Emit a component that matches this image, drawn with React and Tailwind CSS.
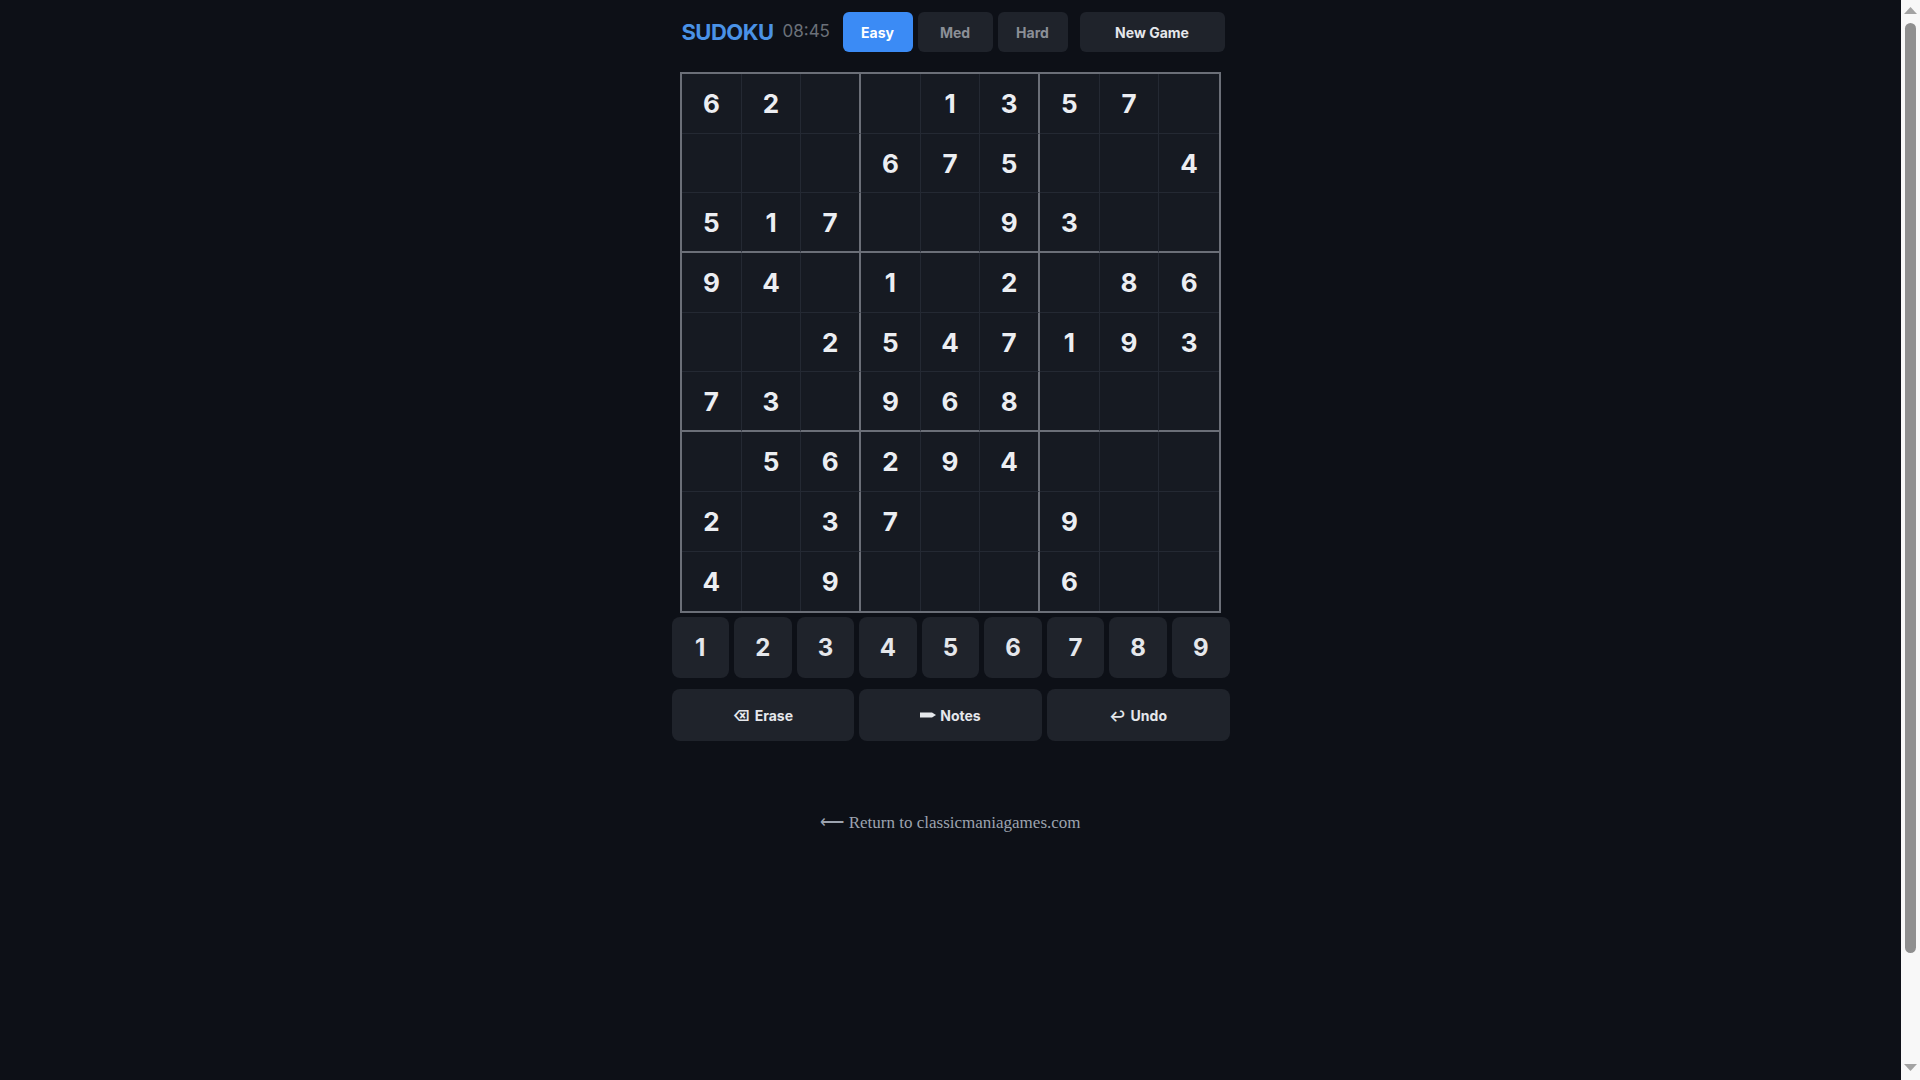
import React, { useState } from 'react';

const PUZZLE = [
  [6, 2, 0, 0, 1, 3, 5, 7, 0],
  [0, 0, 0, 6, 7, 5, 0, 0, 4],
  [5, 1, 7, 0, 0, 9, 3, 0, 0],
  [9, 4, 0, 1, 0, 2, 0, 8, 6],
  [0, 0, 2, 5, 4, 7, 1, 9, 3],
  [7, 3, 0, 9, 6, 8, 0, 0, 0],
  [0, 5, 6, 2, 9, 4, 0, 0, 0],
  [2, 0, 3, 7, 0, 0, 9, 0, 0],
  [4, 0, 9, 0, 0, 0, 6, 0, 0],
];

const font = { fontFamily: 'Inter, "Liberation Sans", sans-serif' };

// thin lines inside a box, grey thick lines between boxes
const cellBorder = (r, c) => {
  let cls = '';
  if (c === 2 || c === 5) cls += ' border-r-2 border-r-[#6b6f78]';
  else if (c < 8) cls += ' border-r border-r-[#242933]';
  if (r === 2 || r === 5) cls += ' border-b-2 border-b-[#6b6f78]';
  else if (r < 8) cls += ' border-b border-b-[#242933]';
  return cls;
};

const PencilIcon = () => (
  <svg width="16" height="6" viewBox="0 0 16 6" className="mr-[4px]">
    <path d="M0 0.5h12l4 2.5-4 2.5H0z" fill="currentColor" />
  </svg>
);

// the browser's scrollbar as it shows in the screenshot
const ScrollBar = () => (
  <div className="fixed top-0 right-0 h-screen w-[19px] bg-[#f8f8f8] flex flex-col items-center">
    <svg width="13" height="8" viewBox="0 0 13 8" className="mt-[7px]">
      <path d="M6.5 0L13 7H0z" fill="#a3a3a3" />
    </svg>
    <div className="mt-[8px] w-[11px] h-[930px] rounded-full bg-[#8f8f8f]" />
    <div className="flex-1" />
    <svg width="13" height="8" viewBox="0 0 13 8" className="mb-[8px]">
      <path d="M0 0h13L6.5 7z" fill="#a3a3a3" />
    </svg>
  </div>
);

const App = () => {
  const [level, setLevel] = useState('Easy');
  const [selected, setSelected] = useState(null);

  return (
    <div className="min-h-screen box-content pb-32 pr-[19px] bg-[#0d1017] text-[#e5e7eb]" style={font}>
      <div className="w-[558px] mx-auto pt-[12px]">
        {/* Header */}
        <div className="flex items-center h-[40px] pl-[10px]">
          <h1 className="w-[90px] whitespace-nowrap text-[22px] font-bold tracking-tight text-[#4a92e6]">SUDOKU</h1>
          <span className="ml-[11px] w-[44px] text-[17px] text-[#6b7079]">08:45</span>
          <div className="ml-[16px] flex gap-[5px]">
            {['Easy', 'Med', 'Hard'].map((l) => (
              <button
                key={l}
                onClick={() => setLevel(l)}
                className={
                  'h-[40px] rounded-md text-[14px] font-bold ' +
                  (l === 'Med' ? 'w-[75px] ' : 'w-[70px] ') +
                  (level === l ? 'bg-[#3b8bf5] text-white' : 'bg-[#1f232b] text-[#8b8f97]')
                }
              >
                {l}
              </button>
            ))}
          </div>
          <button className="ml-[12px] w-[145px] h-[40px] rounded-md bg-[#1f232b] text-[14px] font-bold text-[#e5e7eb]">
            New Game
          </button>
        </div>

        {/* Board */}
        <div className="mt-[20px] mx-auto w-[541px] border-2 border-[#6b6f78] bg-[#161a22] grid grid-cols-9">
          {PUZZLE.map((row, r) =>
            row.map((v, c) => (
              <div
                key={r + '-' + c}
                onClick={() => setSelected(r * 9 + c)}
                className={
                  'h-[59.7px] flex items-center justify-center text-[26px] font-bold text-[#eceef2]' +
                  cellBorder(r, c)
                }
              >
                {v || ''}
              </div>
            ))
          )}
        </div>

        {/* Number pad */}
        <div className="mt-[4px] grid grid-cols-9 gap-[5px]">
          {[1, 2, 3, 4, 5, 6, 7, 8, 9].map((n) => (
            <button key={n} className="h-[61px] rounded-lg bg-[#1f232b] text-[24px] font-bold text-[#e5e7eb]">
              {n}
            </button>
          ))}
        </div>

        {/* Actions */}
        <div className="mt-[11px] grid grid-cols-3 gap-[5px]">
          <button className="h-[52px] rounded-lg bg-[#1f232b] flex items-center justify-center text-[14px] font-bold">
            <span className="mr-[5px]">⌫</span>Erase
          </button>
          <button className="h-[52px] rounded-lg bg-[#1f232b] flex items-center justify-center text-[14px] font-bold">
            <PencilIcon />Notes
          </button>
          <button className="h-[52px] rounded-lg bg-[#1f232b] flex items-center justify-center text-[14px] font-bold">
            <span className="mr-[5px]">↩</span>Undo
          </button>
        </div>

        <div className="mt-[69px] text-center">
          <a href="#" className="text-[17px] text-[#9ca3af]" style={{ fontFamily: '"Liberation Serif", serif' }}>
            ⟵ Return to classicmaniagames.com
          </a>
        </div>
      </div>
      <ScrollBar />
    </div>
  );
};

export default App;
